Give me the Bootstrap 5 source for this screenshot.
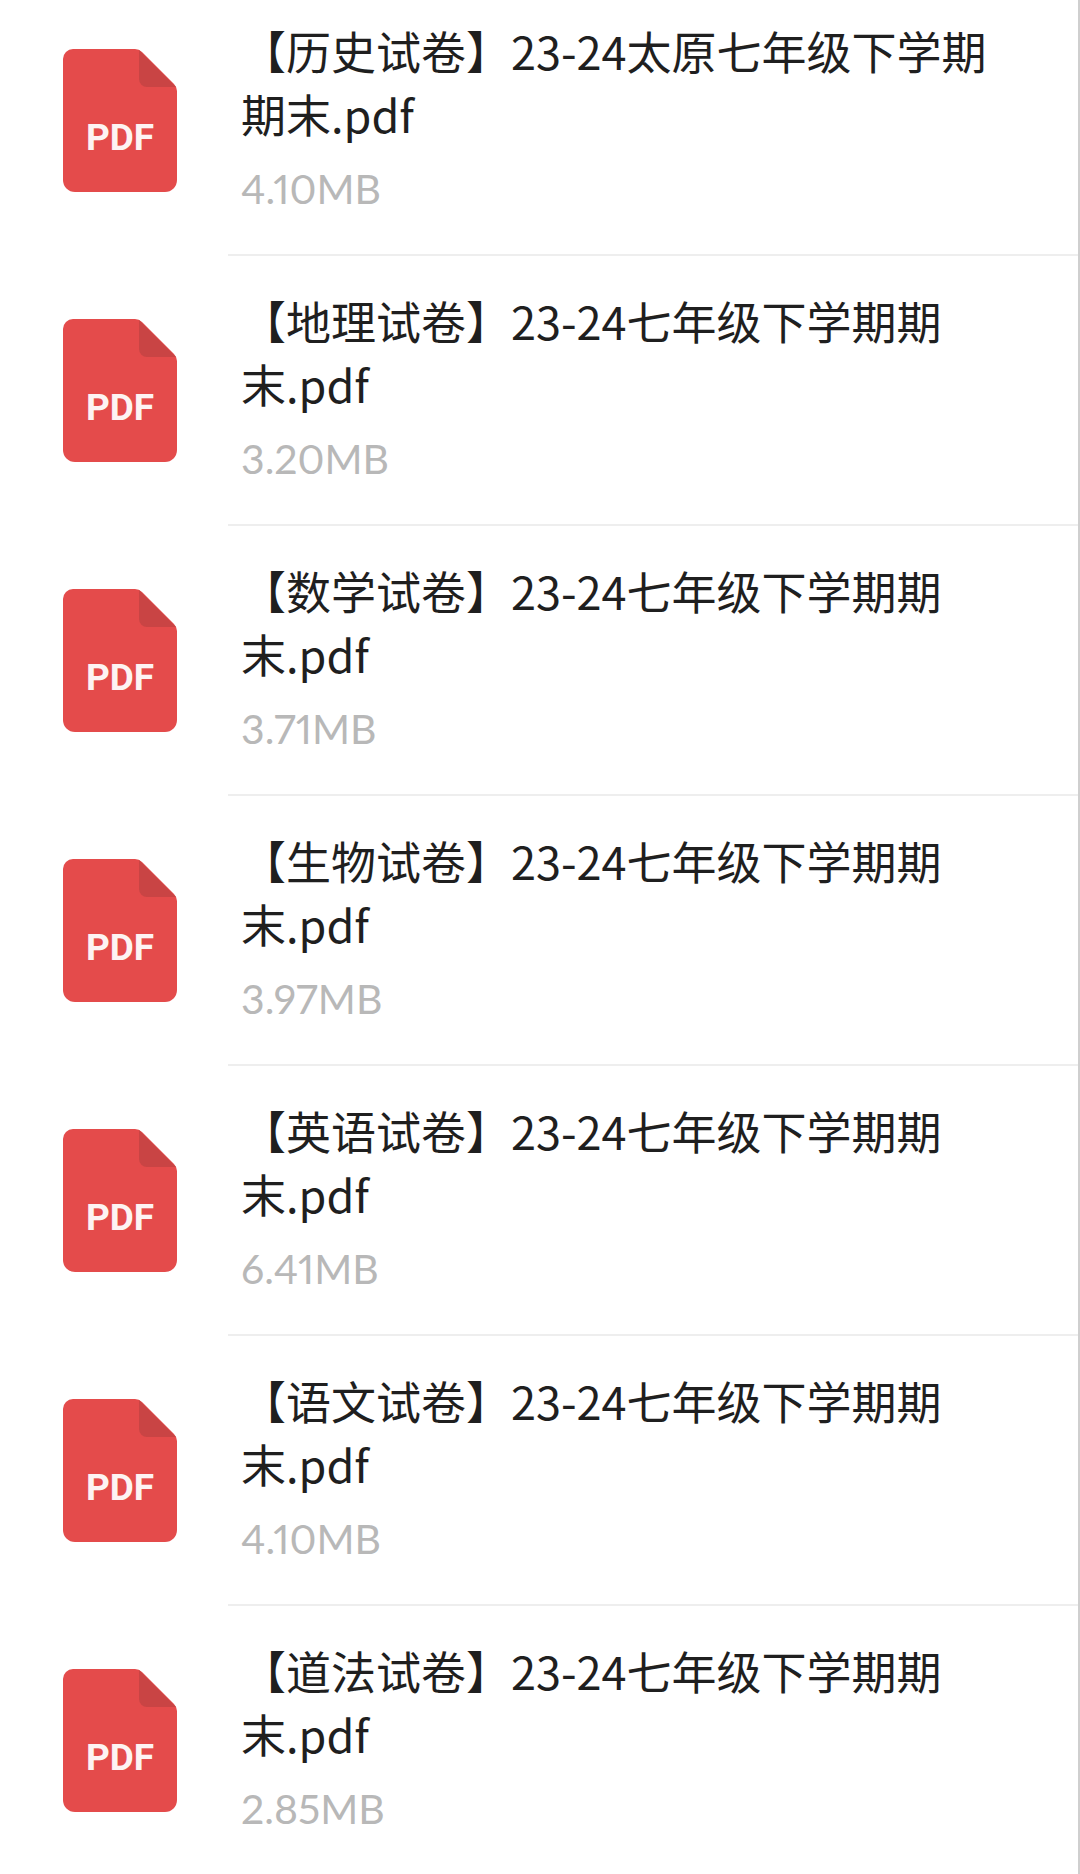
<!DOCTYPE html>
<html lang="zh-CN">
<head>
  <meta charset="UTF-8"/>
  <meta name="viewport" content="width=device-width, initial-scale=1.0"/>
  <title>试卷文件列表</title>
  <link href="https://cdn.jsdelivr.net/npm/bootstrap@5.3.0/dist/css/bootstrap.min.css" rel="stylesheet"/>
  <style>
    body { background: #fff; overflow: hidden; }
    .file-list { border-right: 2px solid #cfcfcf; height: 1874px; border-radius: 0; }
    .file-row { padding: 0; border: 0; background: transparent; }
    .file-icon { width: 114px; height: 143px; margin: 63px 51px 0 63px; flex-shrink: 0; }
    .file-icon text { font-family: "Roboto", "Noto Sans", sans-serif; font-size: 37px; font-weight: 700; fill: #fdf3f3; }
    .file-body { padding: 33px 0 35px; border-bottom: 2px solid #eeeeee; min-width: 0; }
    .file-row:first-child .file-body { padding-top: 19px; }
    .file-row:first-child .file-icon { margin-top: 49px; }
    .file-row:last-child .file-body { border-bottom: 0; }
    .file-name { padding: 0 60px 0 13px; margin: 0; font-family: "Noto Sans CJK SC", sans-serif; font-size: 45px; line-height: 63px; color: #1f1f1f; }
    .file-size { padding: 0 13px; margin-top: 14px; font-family: "Lato", sans-serif; font-size: 41px; line-height: 60px; color: #b8b8b8; font-feature-settings: "pnum"; }
  </style>
</head>
<body>
  <div class="list-group file-list" id="fileList"></div>

  <script>
    const files = [
      { name: "【历史试卷】23-24太原七年级下学期期末.pdf", size: "4.10MB" },
      { name: "【地理试卷】23-24七年级下学期期末.pdf", size: "3.20MB" },
      { name: "【数学试卷】23-24七年级下学期期末.pdf", size: "3.71MB" },
      { name: "【生物试卷】23-24七年级下学期期末.pdf", size: "3.97MB" },
      { name: "【英语试卷】23-24七年级下学期期末.pdf", size: "6.41MB" },
      { name: "【语文试卷】23-24七年级下学期期末.pdf", size: "4.10MB" },
      { name: "【道法试卷】23-24七年级下学期期末.pdf", size: "2.85MB" }
    ];

    const list = document.getElementById("fileList");
    files.forEach(f => {
      const div = document.createElement("div");
      div.className = "list-group-item file-row d-flex";
      div.innerHTML = `
        <svg class="file-icon" viewBox="0 0 114 143" aria-hidden="true">
          <path d="M10 0H72Q76 0 79 3L111 35Q114 38 114 42V131a12 12 0 0 1-12 12H12a12 12 0 0 1-12-12V10A10 10 0 0 1 10 0Z" fill="#e44b4b"/>
          <path d="M76 1L113 38H84a8 8 0 0 1-8-8Z" fill="#c94444"/>
          <text x="57" y="101" text-anchor="middle">PDF</text>
        </svg>
        <div class="file-body flex-grow-1">
          <p class="file-name">${f.name}</p>
          <div class="file-size">${f.size}</div>
        </div>`;
      list.appendChild(div);
    });
  </script>
  <script src="https://cdn.jsdelivr.net/npm/bootstrap@5.3.0/dist/js/bootstrap.bundle.min.js"></script>
</body>
</html>
